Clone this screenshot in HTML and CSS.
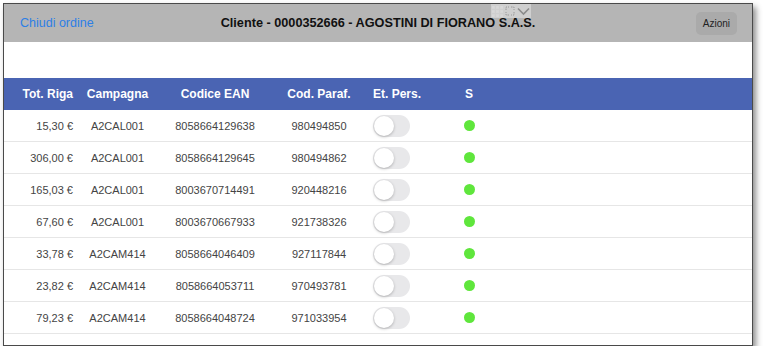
FILE: index.html
```html
<!DOCTYPE html>
<html lang="it">
<head>
    <meta charset="UTF-8">
    <meta name="viewport" content="width=device-width, initial-scale=1.0">
    <title>Ordine cliente</title>
    <link rel="stylesheet" href="styles.css">
</head>
<body>
    <div class="screen">
        <div class="navbar">
            <a class="nav-back" href="#">Chiudi ordine</a>
            <div class="nav-title">Cliente - 0000352666 - AGOSTINI DI FIORANO S.A.S.</div>
            <button class="nav-action">Azioni</button>

            <!-- window controls overlay -->
            <div class="win-tools">
                <svg width="11" height="11" viewBox="0 0 12 12">
                    <g fill="#d8d8d8">
                        <rect x="0" y="0" width="3" height="3"/><rect x="4.5" y="0" width="3" height="3"/><rect x="9" y="0" width="3" height="3"/>
                        <rect x="0" y="4.5" width="3" height="3"/><rect x="4.5" y="4.5" width="3" height="3"/><rect x="9" y="4.5" width="3" height="3"/>
                        <rect x="0" y="9" width="3" height="3"/><rect x="4.5" y="9" width="3" height="3"/><rect x="9" y="9" width="3" height="3"/>
                    </g>
                </svg>
                <svg width="10" height="10" viewBox="0 0 10 10">
                    <path d="M1 4V1h3M6 1h3v3M9 6v3H6M4 9H1V6" fill="none" stroke="#9a9a9a" stroke-width="1" stroke-dasharray="1.5 1"/>
                </svg>
                <svg width="13" height="9" viewBox="0 0 13 9">
                    <path d="M1 1.5l5.5 5.5L12 1.5" fill="none" stroke="#8c8c8c" stroke-width="1.6"/>
                </svg>
            </div>
        </div>

        <div class="spacer"></div>

        <div class="table">
            <div class="row head">
                <div class="cell c-tot">Tot. Riga</div>
                <div class="cell c-camp">Campagna</div>
                <div class="cell c-ean">Codice EAN</div>
                <div class="cell c-par">Cod. Paraf.</div>
                <div class="cell c-et">Et. Pers.</div>
                <div class="cell c-s">S</div>
            </div>
            <div id="rows"></div>
        </div>
    </div>

    <script>
        const righe = [
            ['15,30 €', 'A2CAL001', '8058664129638', '980494850'],
            ['306,00 €', 'A2CAL001', '8058664129645', '980494862'],
            ['165,03 €', 'A2CAL001', '8003670714491', '920448216'],
            ['67,60 €', 'A2CAL001', '8003670667933', '921738326'],
            ['33,78 €', 'A2CAM414', '8058664046409', '927117844'],
            ['23,82 €', 'A2CAM414', '8058664053711', '970493781'],
            ['79,23 €', 'A2CAM414', '8058664048724', '971033954']
        ];

        const rows = document.getElementById('rows');
        righe.forEach(function(r) {
            const row = document.createElement('div');
            row.className = 'row';
            row.innerHTML =
                '<div class="cell c-tot">' + r[0] + '</div>' +
                '<div class="cell c-camp">' + r[1] + '</div>' +
                '<div class="cell c-ean">' + r[2] + '</div>' +
                '<div class="cell c-par">' + r[3] + '</div>' +
                '<div class="cell c-et"><span class="toggle"><span class="knob"></span></span></div>' +
                '<div class="cell c-s"><span class="dot"></span></div>';
            rows.appendChild(row);
        });
    </script>
</body>
</html>
```

FILE: styles.css
```css
body {
    margin: 0;
    background-color: #ffffff;
    font-family: "Liberation Sans", Arial, sans-serif;
}
.screen {
    position: relative;
    margin: 3px 0 0 3px;
    width: 748px;
    height: 341px;
    border: 1px solid #4a4a4a;
    background-color: #ffffff;
    box-shadow: 3px 4px 6px rgba(0, 0, 0, 0.45);
    overflow: hidden;
}
.navbar {
    position: relative;
    height: 38px;
    background-color: #b5b5b5;
    display: flex;
    align-items: center;
    justify-content: space-between;
    padding: 0 15px 0 16px;
}
.nav-back {
    color: #2d7fe6;
    text-decoration: none;
    font-size: 12.5px;
}
.nav-title {
    position: absolute;
    left: 0;
    right: 0;
    text-align: center;
    font-weight: bold;
    font-size: 12.7px;
    color: #111;
    pointer-events: none;
}
.nav-action {
    position: relative;
    font-family: inherit;
    font-size: 10px;
    color: #222;
    background-color: #aaaaaa;
    border: none;
    border-radius: 5px;
    padding: 0 7px;
    height: 23px;
}
.win-tools {
    position: absolute;
    left: 487px;
    top: 0;
    display: flex;
    align-items: center;
    gap: 2px;
    height: 14px;
    padding: 0 1px;
    background-color: rgba(255, 255, 255, 0.35);
}
.spacer {
    height: 36px;
}
.row {
    display: flex;
    align-items: center;
    height: 31px;
    border-bottom: 1px solid #e6e6e6;
    font-size: 11px;
    color: #444;
}
.row.head {
    height: 32px;
    border-bottom: none;
    background-color: #4a64b3;
    color: #ffffff;
    font-weight: bold;
    font-size: 12px;
}
.cell {
    flex: none;
}
.c-tot {
    width: 69px;
    text-align: right;
    padding-right: 6px;
}
.c-camp {
    width: 77px;
    text-align: center;
}
.c-ean {
    width: 118px;
    text-align: center;
}
.c-par {
    width: 90px;
    text-align: center;
}
.c-et {
    width: 66px;
    padding-left: 9px;
    display: flex;
}
.c-s {
    width: 60px;
    display: flex;
    justify-content: center;
}
.row.head .c-et {
    display: block;
}
.toggle {
    display: block;
    position: relative;
    width: 37px;
    height: 22px;
    border-radius: 11px;
    background-color: #e8e8ea;
}
.knob {
    position: absolute;
    left: 1px;
    top: 1px;
    width: 20px;
    height: 20px;
    border-radius: 50%;
    background-color: #ffffff;
    box-shadow: 0 1px 3px rgba(0, 0, 0, 0.25);
}
.dot {
    width: 11px;
    height: 11px;
    border-radius: 50%;
    background-color: #5fe63c;
}
```
